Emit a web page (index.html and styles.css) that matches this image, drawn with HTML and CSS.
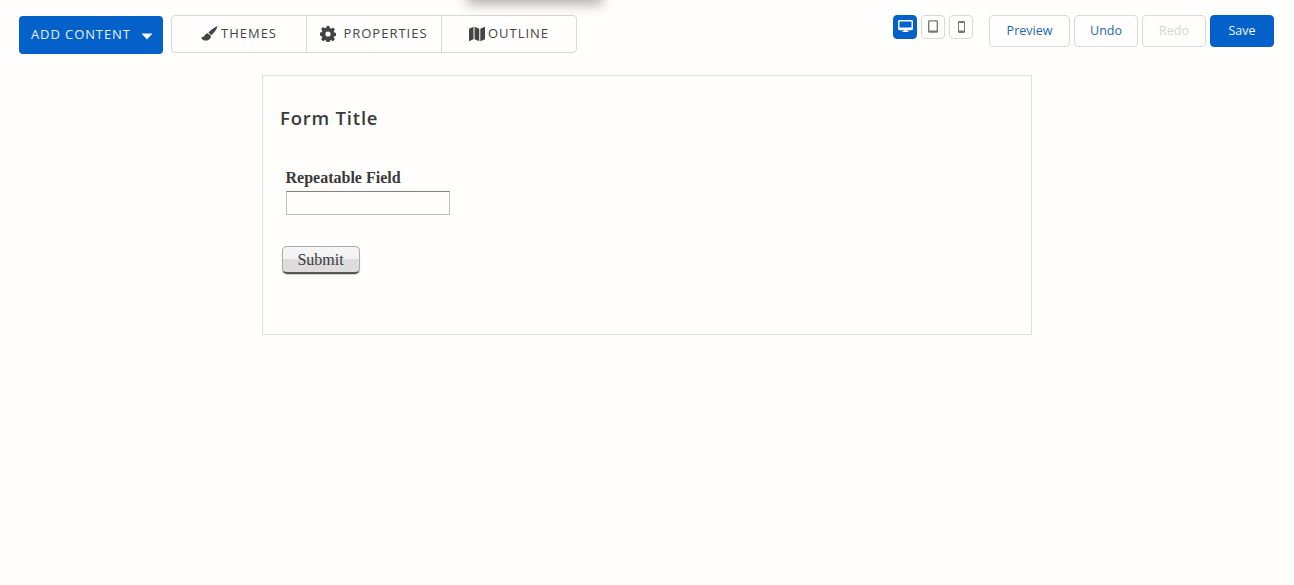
FILE: index.html
```html
<!DOCTYPE html>
<html lang="en">
<head>
<meta charset="utf-8">
<title>Form builder</title>
<link rel="stylesheet" href="styles.css">
</head>
<body>
<div class="drawer-shadow"></div>
<header class="toolbar">
  <button class="add-btn"><span>ADD CONTENT</span>
    <svg class="caret" viewBox="0 0 12 7" width="12" height="7"><path d="M0.500 0.500h11L6 6.500z" fill="#fff"/></svg>
  </button>
  <nav class="tabs">
    <button class="tab">
      <svg width="17" height="15" viewBox="0 0 17 15"><path d="M16.600 0C14 .8 10.400 3.400 7.400 6.600L10.200 9.200C13.200 6.800 15.800 3.200 16.600 0z" fill="#444"/><path d="M6.600 7.200C4.400 7.400 4 9.200 3 10.200 2.200 11 1.200 11.200 0.200 11.200 0.600 13.600 3.400 15.200 6.200 14.400 8.800 13.600 10.200 11.600 9.800 9.800z" fill="#444"/></svg>
      <span>THEMES</span>
    </button>
    <button class="tab">
      <svg width="16" height="16" viewBox="0 0 16 16"><path fill="#444" fill-rule="evenodd" d="M6.600 0h2.800l.4 2.100 1.300.6 1.800-1.200 2 2-1.200 1.800.6 1.300 2.100.4v2.800l-2.100.4-.6 1.300 1.200 1.800-2 2-1.800-1.200-1.300.6-.4 2.100H6.600l-.4-2.100-1.300-.6-1.800 1.200-2-2 1.200-1.800-.6-1.300L0 9.400V6.600l1.700-.4.6-1.300L1.100 3.100l2-2 1.800 1.200 1.300-.6zM8 5.400a2.600 2.600 0 1 0 0 5.200 2.600 2.600 0 0 0 0-5.200z"/></svg>
      <span>PROPERTIES</span>
    </button>
    <button class="tab tab-outline">
      <svg width="16" height="16" viewBox="0 0 15 15"><path fill="#444" d="M0 2.600 4.200.6v11.800L0 14.400zM5.200.6l4.400 2v11.800l-4.400-2zM10.600 2.600 15 .6v11.800l-4.400 2z"/></svg>
      <span>OUTLINE</span>
    </button>
  </nav>
  <div class="devices">
    <button class="device device-on">
      <svg width="15" height="13" viewBox="0 0 16 14"><path fill="#fff" fill-rule="evenodd" d="M1.500 0h13A1.500 1.500 0 0 1 16 1.500v8a1.500 1.500 0 0 1-1.500 1.500H10v1.200h1.500V13h-7v-.8H6V11H1.500A1.500 1.500 0 0 1 0 9.500v-8A1.500 1.500 0 0 1 1.500 0zM1.500 1.500v6.500h13V1.500z"/></svg>
    </button>
    <button class="device">
      <svg width="10" height="13" viewBox="0 0 11 14"><path fill="#777" fill-rule="evenodd" d="M1.500 0h8A1.500 1.500 0 0 1 11 1.500v11A1.500 1.500 0 0 1 9.500 14h-8A1.500 1.500 0 0 1 0 12.500v-11A1.500 1.500 0 0 1 1.500 0zM1.500 1.500v10h8v-10z"/></svg>
    </button>
    <button class="device">
      <svg width="7" height="12" viewBox="0 0 7 12"><path fill="#777" fill-rule="evenodd" d="M1.200 0h4.600A1.200 1.200 0 0 1 7 1.200v9.600A1.200 1.200 0 0 1 5.800 12H1.200A1.200 1.200 0 0 1 0 10.800V1.200A1.200 1.200 0 0 1 1.200 0zM1 2v7.500h5V2z"/></svg>
    </button>
  </div>
  <div class="actions">
    <button class="action action-preview">Preview</button>
    <button class="action action-undo">Undo</button>
    <button class="action action-redo" disabled>Redo</button>
    <button class="action action-save">Save</button>
  </div>
</header>
<main class="canvas">
  <section class="form-card">
    <h1 class="form-title">Form Title</h1>
    <label class="field-label" for="rf">Repeatable Field</label>
    <input class="field-input" id="rf" type="text">
    <button class="submit">Submit</button>
  </section>
</main>
</body>
</html>
```
FILE: styles.css
```css
* { box-sizing: border-box; }
html, body { margin: 0; height: 100%; }
body {
  background: #fffefd;
  font-family: "Open Sans", sans-serif;
  overflow: hidden;
  position: relative;
}
button { font-family: inherit; margin: 0; cursor: pointer; }

.drawer-shadow {
  position: absolute;
  left: 472px;
  top: -13px;
  width: 126px;
  height: 10px;
  box-shadow: 0 3px 12px 5px rgba(80,80,80,.42);
}

.toolbar {
  display: flex;
  align-items: flex-start;
  padding: 15px 20px 0 19px;
  height: 75px;
}
.add-btn {
  width: 144px;
  height: 38px;
  margin-top: 1px;
  background: #0461c9;
  border: 0;
  border-radius: 4px;
  color: #e8f1fb;
  font-size: 13px;
  letter-spacing: .9px;
  display: flex;
  align-items: center;
  justify-content: space-between;
  padding: 0 10px 2px 12px;
  white-space: nowrap;
}
.caret { margin-top: 5px; }

.tabs {
  display: flex;
  margin-left: 8px;
  height: 38px;
  width: 406px;
  border: 1px solid #d8d8da;
  border-radius: 4px;
}
.tab {
  flex: 0 0 135px;
  background: none;
  border: 0;
  border-right: 1px solid #d8d8da;
  color: #444;
  font-size: 13px;
  letter-spacing: 1px;
  display: flex;
  align-items: center;
  justify-content: center;
  gap: 3px;
  padding: 0 0 2px;
  white-space: nowrap;
}
.tab:nth-child(2) { gap: 7px; }
.tab svg { margin-top: 1px; }
.tab-outline { border-right: 0; flex: 1; }

.devices {
  display: flex;
  gap: 4px;
  margin-left: auto;
}
.device {
  width: 24px;
  height: 24px;
  background: none;
  border: 1px solid #d8d8da;
  border-radius: 4px;
  padding: 0 0 1px;
  display: flex;
  align-items: center;
  justify-content: center;
}
.device-on { background: #0461c9; border-color: #0461c9; }

.actions {
  display: flex;
  gap: 4px;
  margin-left: 16px;
}
.action {
  height: 32px;
  background: none;
  border: 1px solid #d8dade;
  border-radius: 4px;
  color: #1a66b8;
  font-size: 12.5px;
  padding: 0 0 2px;
}
.action-preview { width: 81px; }
.action-undo { width: 64px; }
.action-redo { width: 64px; color: #d4d4d4; }
.action-save { width: 64px; background: #0461c9; border-color: #0461c9; color: #f2f7fd; }

.canvas {
  display: flex;
  justify-content: center;
}
.form-card {
  width: 770px;
  height: 260px;
  border: 1px solid #e0e0e0;
  display: flex;
  flex-direction: column;
  align-items: flex-start;
  padding: 29px 0 0 17px;
}
.form-title {
  margin: 0;
  font-size: 18.5px;
  line-height: 26px;
  font-weight: 600;
  letter-spacing: .8px;
  color: #3a3a3a;
}
.field-label {
  margin: 38px 0 0 5.5px;
  font-family: "Liberation Serif", serif;
  font-weight: 700;
  font-size: 16px;
  line-height: 18px;
  color: #3a3a3a;
}
.field-input {
  margin: 4px 0 0 6px;
  width: 164px;
  height: 24px;
  border: 1px solid #c0c0c0;
  border-top-color: #808080;
  background: #fffefd;
  padding: 0;
}
.submit {
  margin: 31px 0 0 2px;
  width: 78px;
  height: 28px;
  font-family: "Liberation Serif", serif;
  font-size: 16px;
  color: #3a3a3a;
  border: 1px solid #aaa;
  border-bottom: 2px solid #555;
  border-radius: 5px;
  background: linear-gradient(#f6f6f8 0, #f2f2f4 50%, #dcdcde 50%, #dedcdc 100%);
  padding: 0 1px 0 0;
  box-shadow: 0 1px 1px rgba(0,0,0,.2);
}
```
